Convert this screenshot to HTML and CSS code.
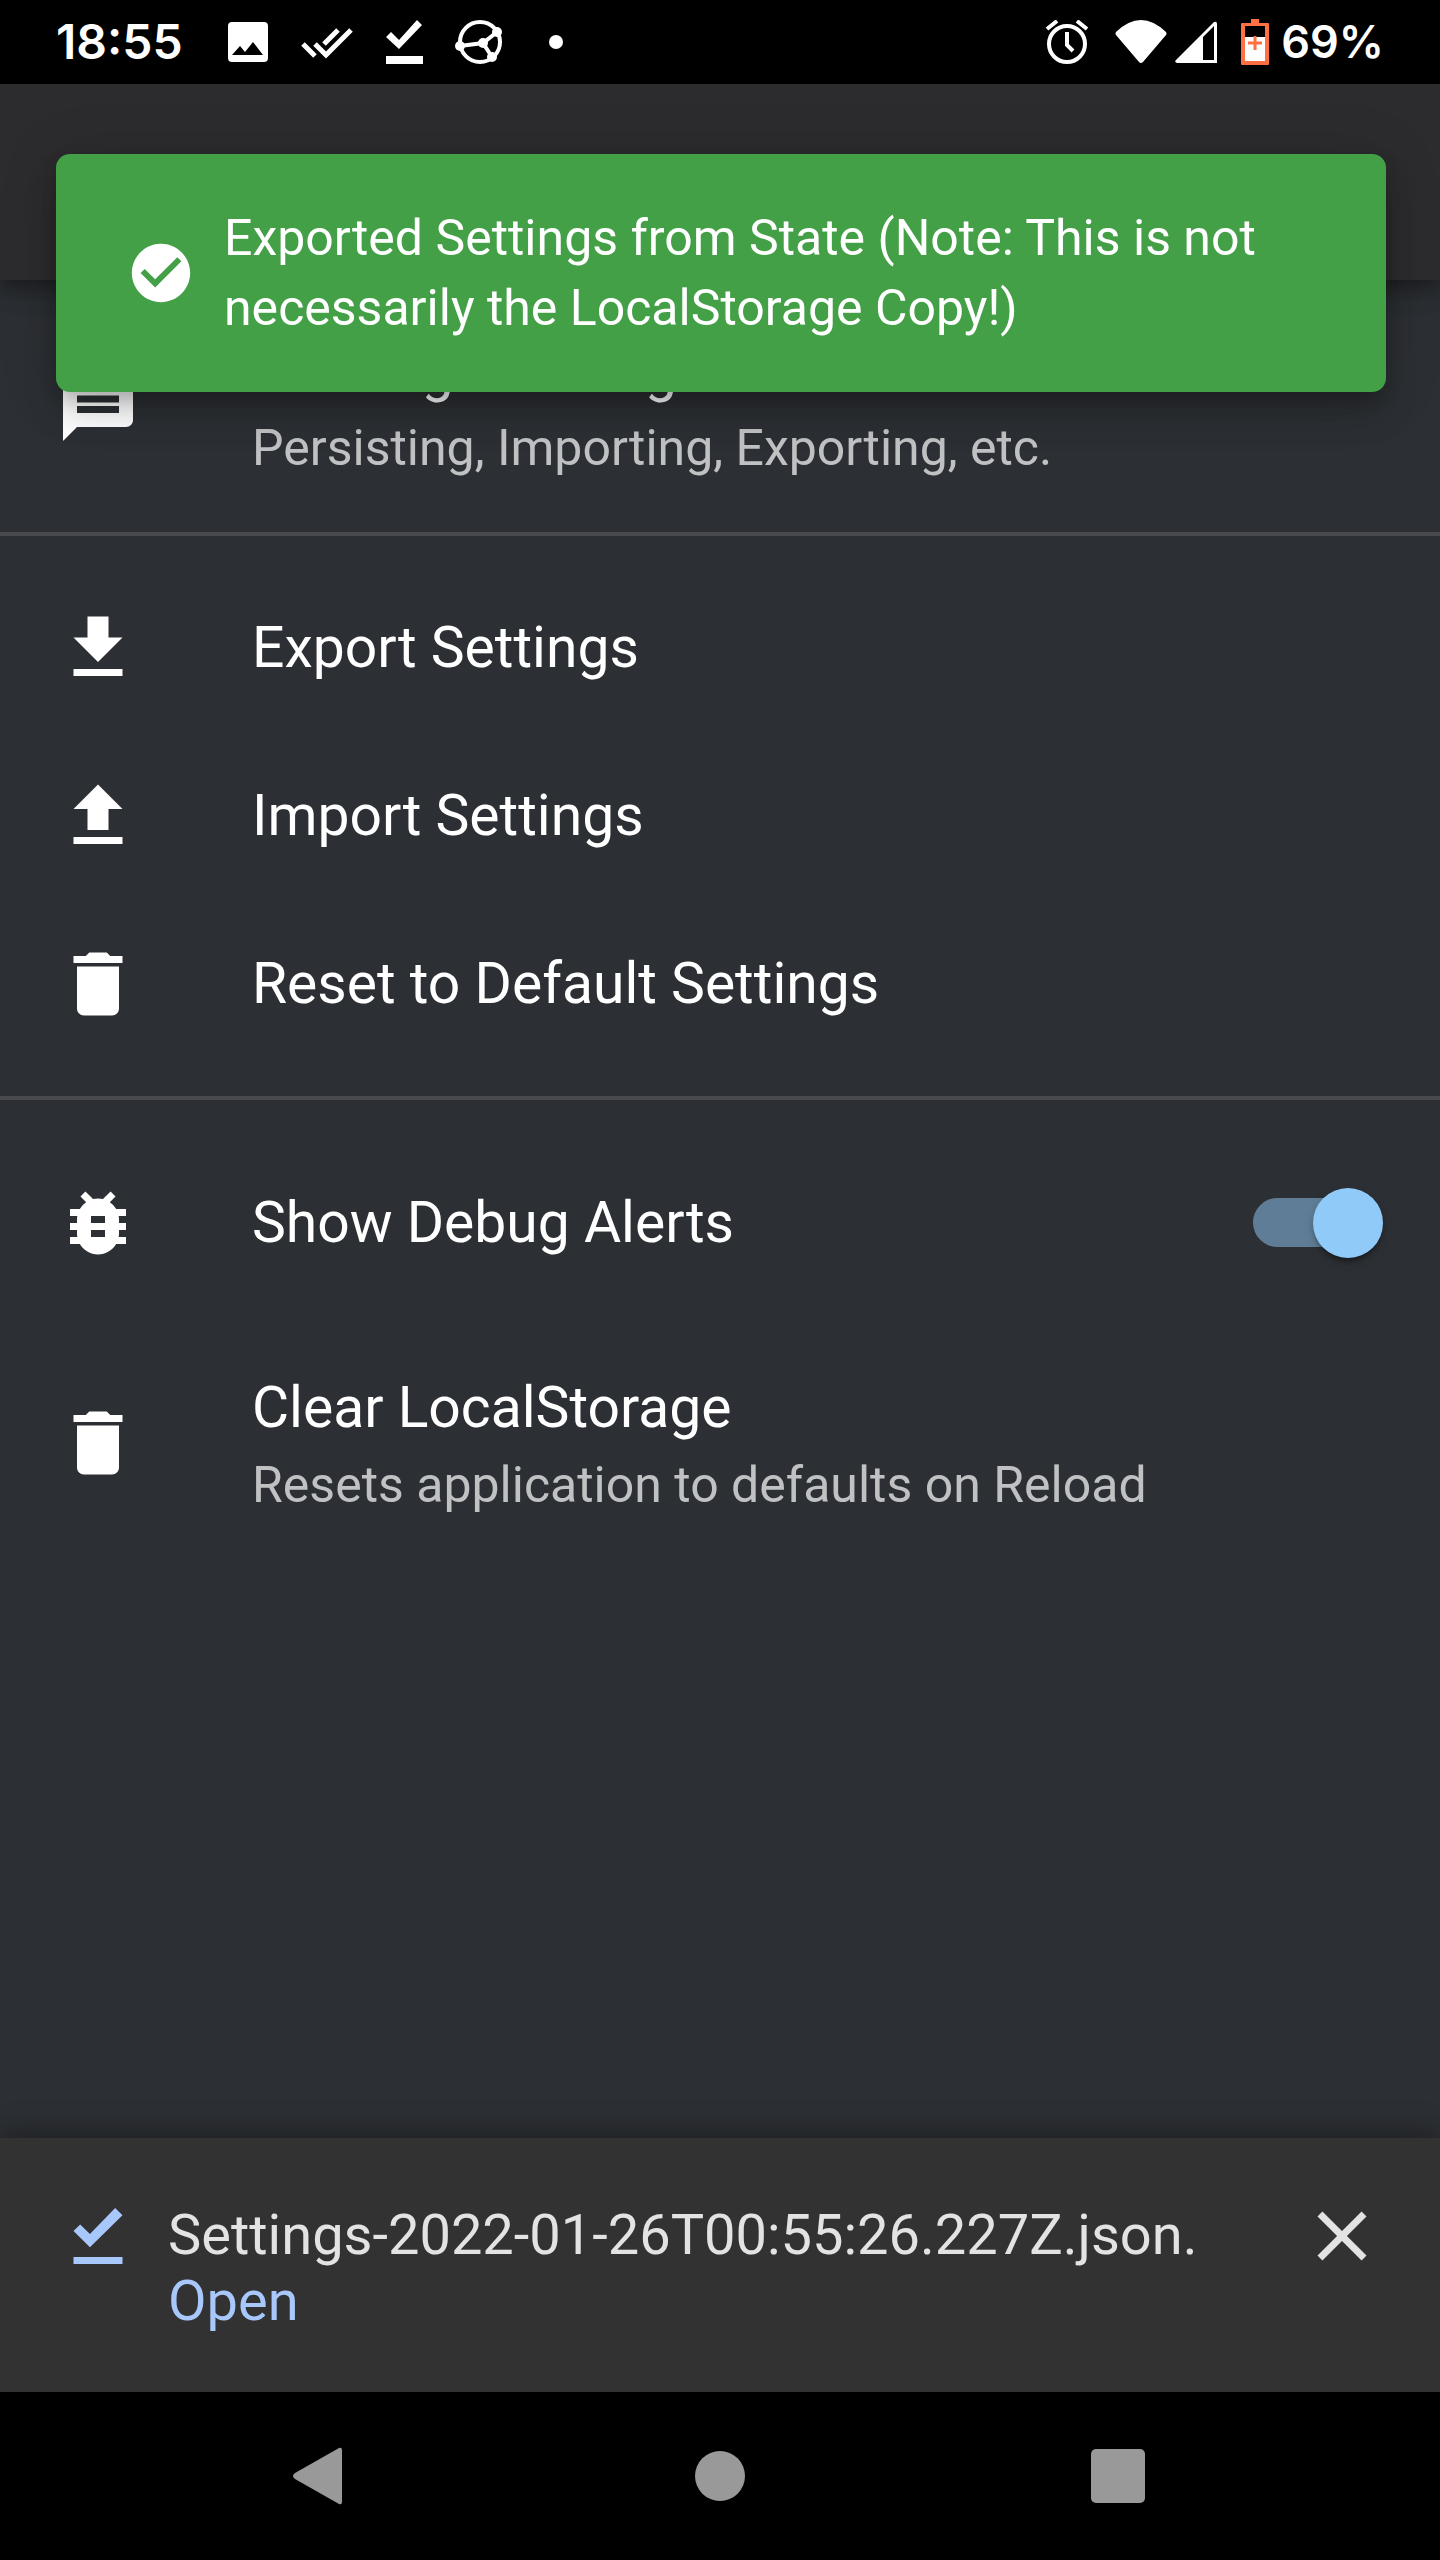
FILE: index.html
```html
<!DOCTYPE html>
<html lang="en">
<head>
<meta charset="utf-8">
<meta name="viewport" content="width=device-width, initial-scale=1">
<title>Settings</title>
<link rel="stylesheet" href="styles.css">
</head>
<body>
<div class="status-bar">
  <div class="status-left">
    <time class="status-text">18:55</time>
    <svg class="status-icon" width="42" height="42" viewBox="0 0 42 42" aria-hidden="true"><path fill-rule="evenodd" d="M5 1h32a4 4 0 0 1 4 4v32a4 4 0 0 1-4 4H5a4 4 0 0 1-4-4V5a4 4 0 0 1 4-4zM5 34h31L26 21l-8 10-5-6z"/></svg>
    <svg class="status-icon" width="52" height="42" viewBox="0 0 52 42" aria-hidden="true"><path class="line" d="M2 23l12 12M14 23l11 11L50 9M23 23L37 9"/></svg>
    <svg class="status-icon" width="38" height="44" viewBox="0 0 38 44" aria-hidden="true"><path d="M32 0l5 5-23 24L1 17l5-5 8 8zM1 36h37v8H1z"/></svg>
    <svg class="status-icon" width="48" height="44" viewBox="0 0 48 44" aria-hidden="true"><circle class="line thin" cx="25" cy="22" r="20"/><path class="line thin" d="M5 26l23-3 14-11M28 23l9 14"/><circle cx="5" cy="26" r="5"/><circle cx="28" cy="23" r="5"/><circle cx="42" cy="12" r="5"/><circle cx="37" cy="37" r="5"/></svg>
    <svg class="status-icon status-dot" width="14" height="14" viewBox="0 0 14 14" aria-hidden="true"><circle cx="7" cy="7" r="7"/></svg>
  </div>
  <div class="status-right">
    <svg class="status-icon" width="44" height="44" viewBox="0 0 44 44" aria-hidden="true"><circle class="line thin" cx="22" cy="24" r="18"/><path class="line thin" d="M22 12v13l6 6M2 9l10-8M42 9L32 1"/></svg>
    <svg class="status-icon status-wifi" width="52" height="44" viewBox="0 0 52 44" aria-hidden="true"><path d="M1 12Q26-12 51 12q1 2 0 3L28 42q-2 2-4 0L1 15q-1-1 0-3z"/></svg>
    <svg class="status-icon" width="42" height="44" viewBox="0 0 42 44" aria-hidden="true"><path fill-rule="evenodd" d="M39 2q3-1 3 2v39H2q-3-1-1-3zM28 17v23h11V6z"/></svg>
    <svg class="status-icon status-battery" width="28" height="46" viewBox="0 0 28 46" aria-hidden="true"><path fill="#ff7043" d="M10 0h8v4h9a1 1 0 0 1 1 1v40a1 1 0 0 1-1 1H1a1 1 0 0 1-1-1V5a1 1 0 0 1 1-1h9z"/><path fill="#000" d="M4 7h20v11H4z"/><path fill="#fff" d="M4 18h20v24H4z"/><path stroke="#ff7043" stroke-width="3" d="M14 17v14M7 24h14"/></svg>
    <span class="status-text">69%</span>
  </div>
</div>

<header class="app-bar"></header>

<div class="toast" role="alert">
  <svg class="toast-icon" viewBox="0 0 24 24" aria-hidden="true"><path d="M12 2C6.500 2 2 6.500 2 12s4.500 10 10 10 10-4.500 10-10S17.500 2 12 2m-2 15-5-5 1.410-1.410L10 14.170l7.590-7.590L19 8z"/></svg>
  <p class="toast-text">Exported Settings from State (Note: This is not necessarily the LocalStorage Copy!)</p>
</div>

<main class="content">
  <div class="row">
    <svg class="icon" viewBox="0 0 24 24" aria-hidden="true"><path d="M20 2H4c-1.100 0-1.990.9-1.990 2L2 22l4-4h14c1.100 0 2-.9 2-2V4c0-1.100-.9-2-2-2zm-2 12H6v-2h12v2zm0-3H6V9h12v2zm0-3H6V6h12v2z"/></svg>
    <span class="row-text row-text-double"><span class="primary">Message Settings</span><span class="secondary">Persisting, Importing, Exporting, etc.</span></span>
  </div>
  <hr class="divider">
  <div class="list">
    <button class="row" type="button">
      <svg class="icon" viewBox="0 0 24 24" aria-hidden="true"><path d="M19 9h-4V3H9v6H5l7 7 7-7zM5 18v2h14v-2H5z"/></svg>
      <span class="row-text"><span class="primary">Export Settings</span></span>
    </button>
    <button class="row" type="button">
      <svg class="icon" viewBox="0 0 24 24" aria-hidden="true"><path d="M9 16h6v-6h4l-7-7-7 7h4zm-4 2h14v2H5z"/></svg>
      <span class="row-text"><span class="primary">Import Settings</span></span>
    </button>
    <button class="row" type="button">
      <svg class="icon" viewBox="0 0 24 24" aria-hidden="true"><path d="M6 19c0 1.100.9 2 2 2h8c1.100 0 2-.9 2-2V7H6v12zM19 4h-3.500l-1-1h-5l-1 1H5v2h14V4z"/></svg>
      <span class="row-text"><span class="primary">Reset to Default Settings</span></span>
    </button>
  </div>
  <hr class="divider">
  <div class="list">
    <label class="row" for="debug-alerts">
      <svg class="icon" viewBox="0 0 24 24" aria-hidden="true"><path d="M20 8h-2.810c-.45-.78-1.070-1.450-1.820-1.960L17 4.410 15.590 3l-2.170 2.170C12.960 5.060 12.490 5 12 5c-.49 0-.96.06-1.410.17L8.410 3 7 4.410l1.620 1.630C7.880 6.550 7.260 7.220 6.810 8H4v2h2.090c-.05.33-.09.66-.09 1v1H4v2h2v1c0 .34.04.67.09 1H4v2h2.810c1.040 1.790 2.970 3 5.190 3s4.150-1.210 5.190-3H20v-2h-2.090c.05-.33.09-.66.09-1v-1h2v-2h-2v-1c0-.34-.04-.67-.09-1H20V8zm-6 8h-4v-2h4v2zm0-4h-4v-2h4v2z"/></svg>
      <span class="row-text"><span class="primary">Show Debug Alerts</span></span>
      <span class="switch-box"><input class="switch" id="debug-alerts" type="checkbox" role="switch" checked></span>
    </label>
    <button class="row" type="button">
      <svg class="icon" viewBox="0 0 24 24" aria-hidden="true"><path d="M6 19c0 1.100.9 2 2 2h8c1.100 0 2-.9 2-2V7H6v12zM19 4h-3.500l-1-1h-5l-1 1H5v2h14V4z"/></svg>
      <span class="row-text row-text-double"><span class="primary">Clear LocalStorage</span><span class="secondary">Resets application to defaults on Reload</span></span>
    </button>
  </div>
</main>

<section class="download-bar" aria-label="Download">
  <svg class="icon download-icon" viewBox="0 0 24 24" aria-hidden="true"><path d="M16.900 4L19 6.100l-9.300 9.100L5 10.600l1.900-1.900 2.800 2.700zM5 18h14v2H5z"/></svg>
  <div class="download-text">
    <span class="download-name">Settings-2022-01-26T00:55:26.227Z.json.</span>
    <a class="download-open" href="#">Open</a>
  </div>
  <button class="close" type="button" aria-label="Close"><svg class="icon" viewBox="0 0 24 24" aria-hidden="true"><path d="M19 6.410L17.590 5 12 10.590 6.410 5 5 6.410 10.590 12 5 17.590 6.410 19 12 13.410 17.590 19 19 17.590 13.410 12z"/></svg></button>
</section>

<nav class="nav-bar" aria-label="System">
  <button class="nav-button" type="button" aria-label="Back"><svg width="60" height="60" viewBox="0 0 60 60"><path d="M49 2q3-1 3 2v52q0 3-3 2L5 33q-4-3 0-6z"/></svg></button>
  <button class="nav-button" type="button" aria-label="Home"><svg width="60" height="60" viewBox="0 0 60 60"><circle cx="30" cy="30" r="25"/></svg></button>
  <button class="nav-button" type="button" aria-label="Recent apps"><svg width="60" height="60" viewBox="0 0 60 60"><rect x="1" y="3" width="54" height="54" rx="5"/></svg></button>
</nav>
</body>
</html>
```

FILE: styles.css
```css
* {
  box-sizing: border-box;
}

body {
  display: flex;
  flex-direction: column;
  min-height: 100vh;
  margin: 0;
  background: #2c2f33;
  color: #fff;
  font-family: Roboto, "Liberation Sans", sans-serif;
  font-size: 56px;
  line-height: 84px;
}

button {
  margin: 0;
  border: 0;
  background: none;
  color: inherit;
  font: inherit;
  text-align: left;
}

svg {
  display: block;
  flex: none;
  fill: currentColor;
}

/* Status bar */
.status-bar {
  display: flex;
  align-items: center;
  justify-content: space-between;
  height: 84px;
  padding: 0 56px;
  background: #000;
}

.status-left,
.status-right {
  display: flex;
  align-items: center;
}

.status-left {
  gap: 32px;
}

.status-text {
  font-family: Inter, sans-serif;
  font-size: 45px;
  font-weight: 600;
  line-height: 82px;
}

.status-left .status-text {
  margin-right: 12px;
  font-size: 48px;
}

.status-dot {
  margin-left: 14px;
}

.status-wifi {
  margin-left: 26px;
  margin-right: 8px;
}

.status-battery {
  margin-left: 24px;
  margin-right: 12px;
}

.line {
  fill: none;
  stroke: currentColor;
  stroke-width: 5;
}

.thin {
  stroke-width: 4;
}

/* App bar and toast */
.app-bar {
  position: relative;
  height: 196px;
  background: #2c2c2e;
  box-shadow: 0 7px 14px -4px rgba(0, 0, 0, 0.2), 0 14px 18px rgba(0, 0, 0, 0.14), 0 4px 35px rgba(0, 0, 0, 0.12);
}

.toast {
  position: absolute;
  top: 154px;
  left: 56px;
  right: 54px;
  z-index: 2;
  display: flex;
  align-items: center;
  gap: 28px;
  padding: 49px 70px;
  border-radius: 14px;
  background: #43a047;
  box-shadow: 0 10px 18px -4px rgba(0, 0, 0, 0.2), 0 21px 35px rgba(0, 0, 0, 0.14), 0 4px 63px rgba(0, 0, 0, 0.12);
}

.toast-icon {
  width: 70px;
  height: 70px;
}

.toast-text {
  margin: 0;
  font-size: 50px;
  line-height: 70px;
}

/* Settings list */
.content {
  flex: 1;
}

.list {
  padding: 28px 0;
}

.row {
  display: flex;
  align-items: center;
  width: 100%;
  padding: 28px 56px;
}

.icon {
  width: 84px;
  height: 84px;
}

.row-text {
  display: flex;
  flex: 1;
  flex-direction: column;
  margin: 14px 0 14px 112px;
}

.row-text-double {
  margin-top: 21px;
  margin-bottom: 21px;
}

.primary {
  font-size: 57px;
}

.secondary {
  color: #c0c1c2;
  font-size: 50px;
  line-height: 70px;
}

.divider {
  height: 4px;
  margin: 0;
  border: 0;
  background: #47494d;
}

.switch-box {
  display: flex;
  align-items: center;
  height: 133px;
}

.switch {
  display: flex;
  align-items: center;
  justify-content: flex-end;
  width: 119px;
  height: 49px;
  margin: 0 12px 0 0;
  border-radius: 25px;
  appearance: none;
  background: #5f7d96;
}

.switch::before {
  content: "";
  flex: none;
  width: 70px;
  height: 70px;
  margin-right: -11px;
  border-radius: 50%;
  background: #90caf9;
  box-shadow: 0 7px 4px -4px rgba(0, 0, 0, 0.2), 0 4px 4px rgba(0, 0, 0, 0.14), 0 4px 11px rgba(0, 0, 0, 0.12);
}

/* Download bar */
.download-bar {
  display: flex;
  align-items: flex-start;
  gap: 28px;
  padding: 56px;
  background: #323232;
  box-shadow: 0 -4px 28px rgba(0, 0, 0, 0.35);
  color: #e3e3e3;
}

.download-icon {
  color: #a8c7fa;
}

.download-text {
  display: flex;
  flex: 1;
  flex-direction: column;
  align-items: flex-start;
  padding: 8px 0 2px;
  line-height: 66px;
}

.download-open {
  color: #a8c7fa;
  text-decoration: none;
}

.close {
  padding: 0;
}

/* System navigation */
.nav-bar {
  display: grid;
  grid-template-columns: repeat(3, 1fr);
  height: 168px;
  padding: 0 120px;
  background: #000;
  color: #999;
}

.nav-button {
  display: flex;
  align-items: center;
  justify-content: center;
}
```
